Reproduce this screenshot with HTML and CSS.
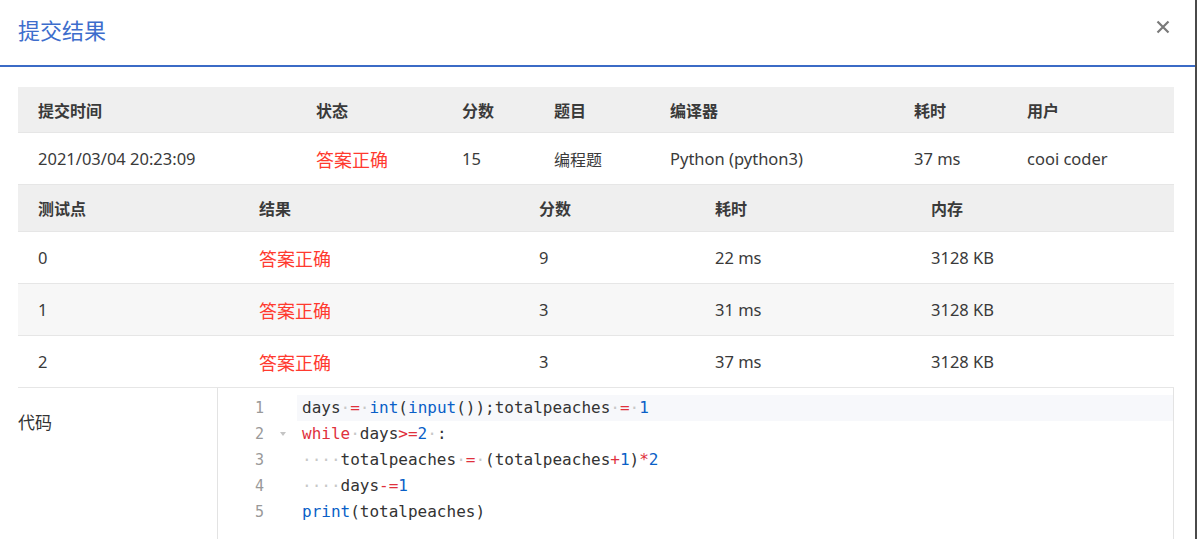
FILE: index.html
```html
<!DOCTYPE html>
<html lang="zh-CN">
<head>
<meta charset="utf-8">
<title>提交结果</title>
<link rel="stylesheet" href="styles.css">
</head>
<body>
<div class="modal">
  <div class="modal-header">
    <h3 class="modal-title">提交结果</h3>
    <button class="close" aria-label="关闭">
      <svg width="14" height="14" viewBox="0 0 14 14"><path d="M1.5 1.5 L12.5 12.5 M12.5 1.5 L1.5 12.5" stroke="#7a7a7a" stroke-width="2.2" fill="none"/></svg>
    </button>
  </div>
  <div class="modal-body">
    <div class="grid grid-summary">
      <div class="row head">
        <div class="cell zh">提交时间</div><div class="cell zh">状态</div><div class="cell zh">分数</div><div class="cell zh">题目</div><div class="cell zh">编译器</div><div class="cell zh">耗时</div><div class="cell zh">用户</div>
      </div>
      <div class="row">
        <div class="cell">2021/03/04 20:23:09</div><div class="cell ok">答案正确</div><div class="cell">15</div><div class="cell zh">编程题</div><div class="cell">Python (python3)</div><div class="cell">37 ms</div><div class="cell">cooi coder</div>
      </div>
    </div>
    <div class="grid grid-cases">
      <div class="row head">
        <div class="cell zh">测试点</div><div class="cell zh">结果</div><div class="cell zh">分数</div><div class="cell zh">耗时</div><div class="cell zh">内存</div>
      </div>
      <div class="row">
        <div class="cell">0</div><div class="cell ok">答案正确</div><div class="cell">9</div><div class="cell">22 ms</div><div class="cell">3128 KB</div>
      </div>
      <div class="row alt">
        <div class="cell">1</div><div class="cell ok">答案正确</div><div class="cell">3</div><div class="cell">31 ms</div><div class="cell">3128 KB</div>
      </div>
      <div class="row">
        <div class="cell">2</div><div class="cell ok">答案正确</div><div class="cell">3</div><div class="cell">37 ms</div><div class="cell">3128 KB</div>
      </div>
    </div>
    <div class="code-section">
      <div class="code-label">代码</div>
      <div class="editor">
        <div class="gutter">
          <div class="gl"><span class="num">1</span><span class="fold"></span></div>
          <div class="gl"><span class="num">2</span><span class="fold"><i class="arrow"></i></span></div>
          <div class="gl"><span class="num">3</span><span class="fold"></span></div>
          <div class="gl"><span class="num">4</span><span class="fold"></span></div>
          <div class="gl"><span class="num">5</span><span class="fold"></span></div>
        </div>
        <div class="lines">
          <div class="line active">days<span class="inv">·</span><span class="op">=</span><span class="inv">·</span><span class="fn">int</span>(<span class="fn">input</span>());totalpeaches<span class="inv">·</span><span class="op">=</span><span class="inv">·</span><span class="nm">1</span></div>
          <div class="line"><span class="kw">while</span><span class="inv">·</span>days<span class="op">&gt;=</span><span class="nm">2</span><span class="inv">·</span>:</div>
          <div class="line"><span class="inv">····</span>totalpeaches<span class="inv">·</span><span class="op">=</span><span class="inv">·</span>(totalpeaches<span class="op">+</span><span class="nm">1</span>)<span class="op">*</span><span class="nm">2</span></div>
          <div class="line"><span class="inv">····</span>days<span class="op">-=</span><span class="nm">1</span></div>
          <div class="line"><span class="fn">print</span>(totalpeaches)</div>
        </div>
      </div>
    </div>
  </div>
</div>
</body>
</html>
```
FILE: styles.css
```css
html, body {
  margin: 0;
  padding: 0;
  height: 100%;
}
body {
  background: #4a4a4a;
  font-family: "Noto Sans", "Noto Sans CJK SC", sans-serif;
  color: #333;
  overflow: hidden;
}
.modal {
  width: 1195px;
  min-height: 100%;
  background: #fff;
}
.modal-header {
  height: 67px;
  border-bottom: 2px solid #3b6bc6;
  display: flex;
  align-items: flex-start;
  justify-content: space-between;
  padding: 0 25px 0 18px;
  box-sizing: border-box;
}
.modal-title {
  margin: 0;
  padding-top: 17px;
  font-family: "Noto Sans CJK SC", sans-serif;
  font-weight: 400;
  font-size: 22px;
  color: #3d6dcc;
  line-height: 24px;
}
.close {
  border: 0;
  background: none;
  padding: 0;
  margin-top: 20px;
  width: 14px;
  height: 14px;
  display: flex;
}
.modal-body {
  padding: 20px 21px 0 18px;
}
.grid .row {
  display: grid;
  height: 52px;
  align-items: center;
  border-bottom: 1px solid #e6e6e6;
  box-sizing: border-box;
  font-size: 16.5px;
  color: #3a3a3a;
}
.grid .row.head {
  height: 46px;
  background: #efefef;
  font-weight: 700;
}
.grid-cases .row.head {
  height: 47px;
}
.grid .row.alt {
  background: #f7f7f7;
}
.grid-summary .row {
  grid-template-columns: 278px 146px 92px 116px 244px 113px 1fr;
}
.grid-cases .row {
  grid-template-columns: 221px 280px 176px 216px 1fr;
}
.cell {
  padding-left: 20px;
  white-space: nowrap;
}
.cell.zh {
  font-family: "Noto Sans CJK SC", sans-serif;
  font-size: 16px;
}
.head .cell.zh {
  font-weight: 700;
  color: #3a3a3a;
}
.cell.ok {
  font-family: "Noto Sans CJK SC", sans-serif;
  font-size: 18px;
  color: #ff3a2f;
}
.code-section {
  display: grid;
  grid-template-columns: 199px 1fr;
  min-height: 160px;
}
.code-label {
  font-family: "Noto Sans CJK SC", sans-serif;
  font-size: 17px;
  color: #333;
  padding-top: 21px;
}
.editor {
  border-left: 1px solid #e3e3e3;
  border-right: 1px solid #e3e3e3;
  display: flex;
  padding-top: 7px;
  font-family: "DejaVu Sans Mono", monospace;
  font-size: 16px;
}
.gutter {
  width: 79px;
  flex: none;
}
.gl {
  height: 26px;
  display: flex;
  align-items: center;
}
.num {
  width: 46px;
  text-align: right;
  font-size: 15px;
  color: #999;
}
.fold {
  flex: 1;
  display: flex;
  justify-content: center;
  padding-left: 4px;
}
.arrow {
  width: 0;
  height: 0;
  border-left: 3px solid transparent;
  border-right: 3px solid transparent;
  border-top: 4px solid #c4c4c4;
}
.lines {
  flex: 1;
}
.line {
  height: 26px;
  line-height: 26px;
  padding-left: 5px;
  color: #333;
  white-space: pre;
}
.line.active {
  background: #f7f8fb;
}
.inv { color: #c8c8c8; }
.op { color: #e0313d; }
.kw { color: #e0313d; }
.fn { color: #0a5fc7; }
.nm { color: #0a5fc7; }
```
